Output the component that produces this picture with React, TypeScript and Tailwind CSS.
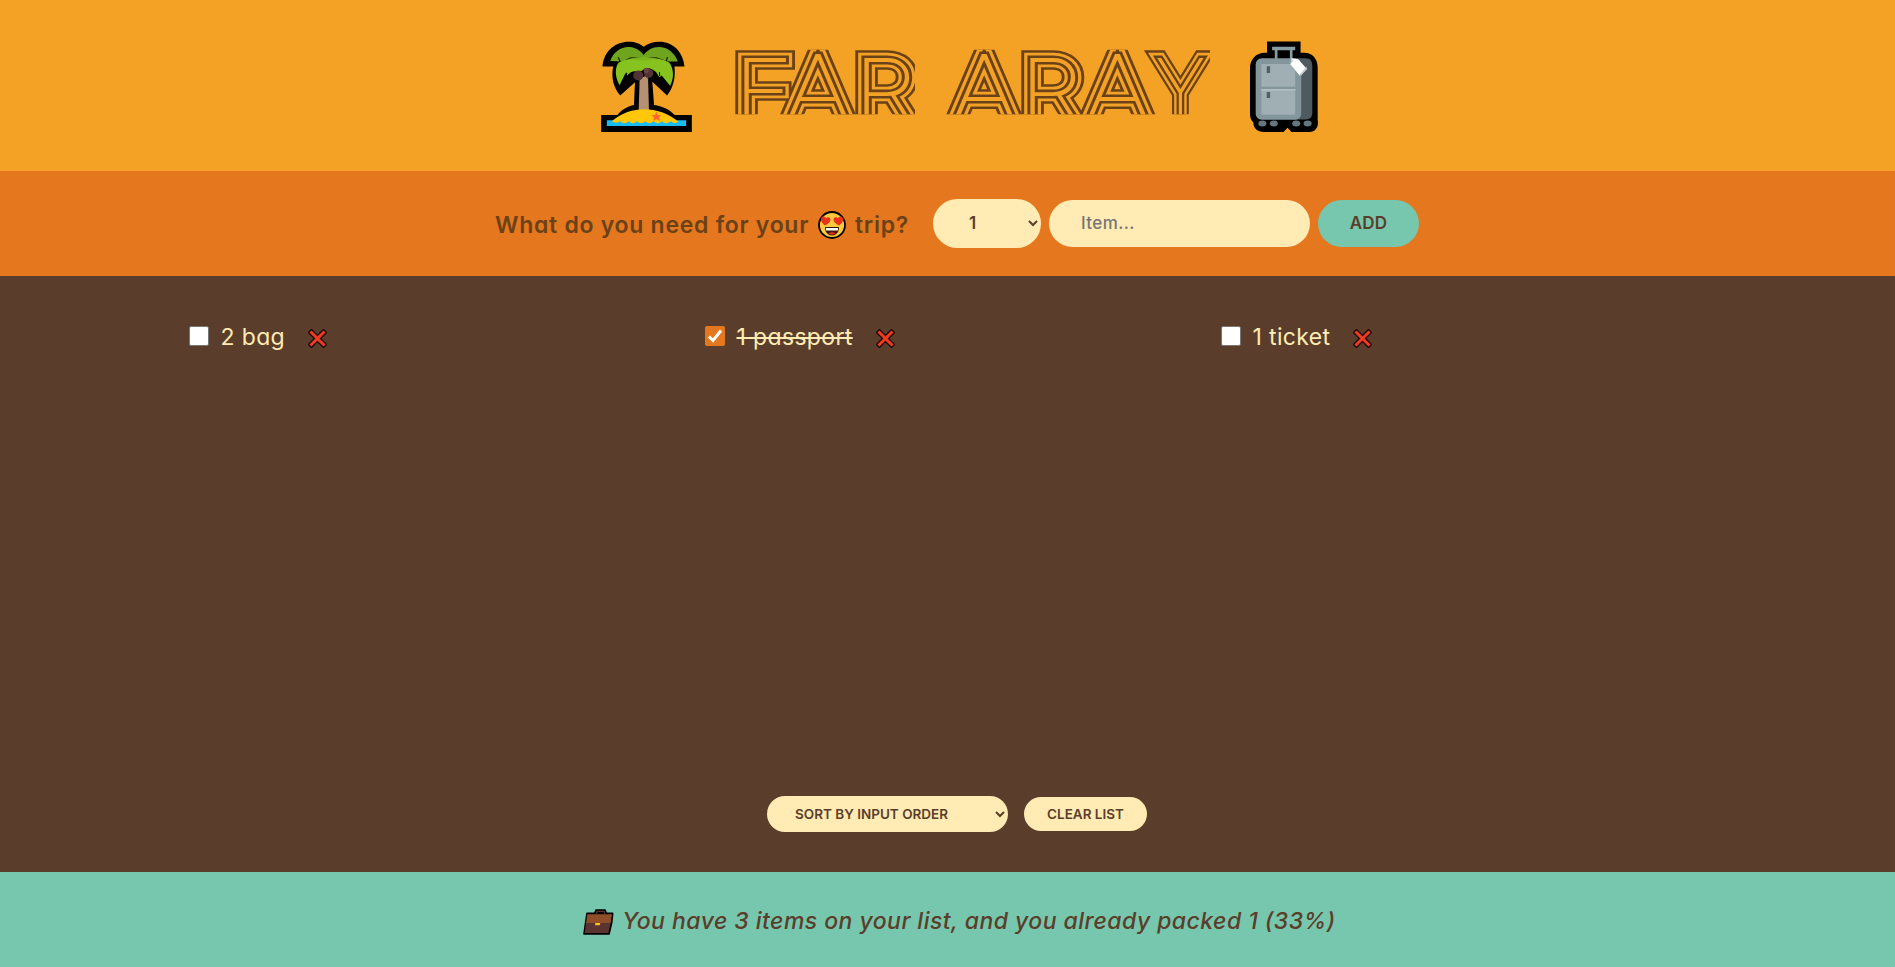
const STROKES = [
  { color: "#6b4218", width: 17.6 },
  { color: "#f4a226", width: 12.6 },
  { color: "#6b4218", width: 7 },
  { color: "#f4a226", width: 1.8 },
];

function Palm() {
  return (
    <svg className="h-[91px] w-[91px] shrink-0" viewBox="34 34 271 272">
      <path fill="#000" d="M38 110C42 62 78 36 116 36c20 0 34 6 45 15 14-10 28-15 47-15 40 0 71 30 75 74h-30c4 34-4 64-22 87l-44-41 5 69c26 4 44 12 62 30h51v51H34v-51h48c16-18 32-26 50-30l3-68-44 40c-20-24-28-54-21-87z" />
      <path fill="#6fa41f" d="M61 94C70 65 96 50 119 52c20 2 34 12 42 24 10-14 26-24 45-24 27 0 48 18 57 43l-30 0-32-12-80 0-26 12z" />
      <path fill="#86c31f" d="M85 100c15-12 45-16 76-14 32-2 62 2 77 13 14 20 14 46 2 69l-25-31-7 5-10-15c-14-12-28-16-42-4l-12 4c-10-6-22-2-32 10l-5-7-18 36c-12-22-16-46-4-66z" />
      <path fill="#79b320" d="M112 88l49-8 49 8-49 4z" />
      <path fill="none" stroke="#000" strokeWidth="3" d="M85 83l6 12M232 82l-3 12M107 141l4-12M209 139l-1-12" />
      <path fill="#b59073" d="M149 145l25-9 3 110h-31z" />
      <path fill="#8d6a52" d="M163 138l11-3v14z" />
      <circle cx="145" cy="137" r="15" fill="#533235" />
      <circle cx="176" cy="130" r="14" fill="#533235" />
      <circle cx="169" cy="122" r="8" fill="#6a464a" />
      <path fill="#18bdf5" d="M51 271h237v17H51z" />
      <path fill="#ffc60a" d="M66 274c30-26 62-36 97-36s72 12 102 37q-12 8-24-1-13 12-25 0-13 12-25 0-13 12-25 0-13 12-25 0-13 12-25 0-13 12-25 0-12 8-25 0z" />
      <path fill="#ff682f" d="M199 245l4 10 11 1-8 7 4 10-11-5-9 5 2-11-8-6 11-1z" />
    </svg>
  );
}

function Suitcase() {
  return (
    <svg className="h-[91px] w-[68px] shrink-0" viewBox="45 35 203 271">
      <path fill="#000" d="M96 36h100v34h10c25 0 41 18 41 43v157c4 20-6 36-24 36h-54l-12-12-12 12H86c-18 0-31-10-31-28-7-6-10-14-10-26V116c0-26 18-46 44-46h7z" />
      <path fill="#8a9da3" d="M111 52h69v10h-69zM119 60h8v30h-8zM164 60h8v32h-8z" />
      <path fill="#4e5a60" d="M175 86h36q20 0 20 22v141q0 20-20 20h-36z" />
      <rect x="62" y="86" width="136" height="184" rx="18" fill="#82969c" />
      <path fill="#9fafb4" d="M79 103h101v68H79zM79 182h101v73H79z" />
      <path fill="#b1bfc3" d="M78 178h103v5H78z" />
      <path fill="#4e6067" d="M95 110h10v20H95zM95 187h10v18H95z" />
      <path fill="#fff" d="M168 86l21 3 26 29-22 20-27-34z" />
      <path fill="#c6ccd0" d="M214 111l-23 26 7 1 16-18zM167 86l8 8-7 8z" />
      <g fill="#65777e">
        <ellipse cx="82" cy="281" rx="12" ry="9" />
        <ellipse cx="116" cy="281" rx="12" ry="9" />
        <ellipse cx="183" cy="281" rx="12" ry="9" />
        <ellipse cx="217" cy="281" rx="12" ry="9" />
      </g>
    </svg>
  );
}

function Title() {
  return (
    <svg className="h-[66px] w-[476px] shrink-0" viewBox="734 50 476 65">
      <defs>
        <clipPath id="band">
          <path d="M734 50h48v65h-48zM781 50h134v65h-134zM946 50h264v65h-264z" />
        </clipPath>
        <text
          id="name"
          y="124"
          x="638.3 681.5 742.6 780 826 887 942 1005.5"
          transform="scale(1.15 1)"
          fontFamily="Inter"
          fontWeight="100"
          fontSize="88"
        >
          F<tspan fontSize="93">A</tspan>R <tspan fontSize="93">A</tspan>R<tspan fontSize="93">A</tspan>
          <tspan textLength="42" lengthAdjust="spacingAndGlyphs">Y</tspan>
        </text>
      </defs>
      <g clipPath="url(#band)">
        {STROKES.map((s) => (
          <use key={s.width} href="#name" fill="#f4a226" stroke={s.color} strokeWidth={s.width} strokeMiterlimit="8" />
        ))}
      </g>
    </svg>
  );
}

function HeartEyes() {
  return (
    <svg className="ml-[9px] mr-[9px] inline-block h-7 w-7 align-[-6px]" viewBox="0 0 28 28">
      <circle cx="14" cy="14" r="13" fill="#ffc83d" stroke="#000" strokeWidth="1.8" />
      <path fill="#e8321c" d="M3 7.500c1-3 4.500-2.500 5 0 1.500-2.300 5-1 4.500 1.600-.3 2.300-2.500 4-5.500 5.400C4.500 12.800 2.500 10.500 3 7.500zM25 7.500c-1-3-4.500-2.500-5 0-1.500-2.300-5-1-4.500 1.600.3 2.300 2.500 4 5.500 5.400 2.500-1.700 4.500-4 4-7z" />
      <path fill="#4a1410" stroke="#000" strokeWidth=".8" d="M7.500 16.500h13c0 5-3 7.500-6.500 7.500s-6.500-2.500-6.500-7.500z" />
      <path fill="#fff" d="M8 17h12v2.500H8z" />
      <path fill="#e8321c" d="M10.500 22.500c2-1.700 5-1.700 7 0-2 1.500-5 1.500-7 0z" />
    </svg>
  );
}

function Briefcase() {
  return (
    <svg className="mr-2 h-[26px] w-[31px] shrink-0" viewBox="42 146 93 78">
      <path fill="#000" stroke="#000" strokeWidth="5" strokeLinejoin="round" d="M54 159h23l4-10h27l4 10h19l-3 28-8 34H45l5-34z" />
      <path fill="#8f4d28" d="M55 162h74l-4 26H51z" />
      <path fill="#5b3330" d="M51 188h74l-7 30H47z" />
      <path fill="none" stroke="#5b3330" strokeWidth="4" d="M82 160l3-7h20l3 7" />
      <path fill="#fcc21b" d="M79 188h15l-2 7H78z" />
    </svg>
  );
}

function Cross() {
  return (
    <svg className="mt-[5px] h-[19px] w-[19px] shrink-0" viewBox="0 0 19 19">
      <path d="M3.500 3.500l12 12M15.500 3.500l-12 12" stroke="#1d0a05" strokeWidth="5.600" strokeLinecap="square" />
      <path d="M3.500 3.500l12 12M15.500 3.500l-12 12" stroke="#f03a22" strokeWidth="3" strokeLinecap="square" />
    </svg>
  );
}

function Box({ checked }: { checked: boolean }) {
  return (
    <span className={checked ? "h-5 w-5 shrink-0 rounded-[2px] bg-[#e5771f]" : "h-5 w-5 shrink-0 rounded-[2px] border border-[#767676] bg-white"}>
      {checked && (
        <svg className="h-5 w-5" viewBox="0 0 20 20">
          <path d="M4 10.500l4 4 8-10" fill="none" stroke="#fff" strokeWidth="3" />
        </svg>
      )}
    </span>
  );
}

const ITEMS = [
  { label: "2 bag", packed: false },
  { label: "1 passport", packed: true },
  { label: "1 ticket", packed: false },
];

export default function App() {
  return (
    <div className="flex h-[967px] w-full flex-col overflow-hidden font-['Inter','Liberation_Sans',sans-serif] text-[#5a3e2b] [font-feature-settings:'cv11']">
      <header className="flex h-[171px] items-start justify-center bg-[#f4a226] pl-6 pt-[41px]">
        <Palm />
        <h1 className="ml-[42px] mr-10 mt-2">
          <Title />
        </h1>
        <Suitcase />
      </header>
      <form className="flex h-[105px] items-center justify-center gap-2 bg-[#e5771f] pb-[1px] pl-[19px]">
        <h3 className="mr-4 whitespace-nowrap pt-1 text-[23px] font-semibold leading-8 tracking-[0.72px] text-[#6b4218]">
          What do you need for your
          <HeartEyes />
          trip?
        </h3>
        <select className="h-[49px] w-[108px] rounded-full bg-[#ffebb3] px-8 text-[17px] font-semibold">
          <option>1</option>
        </select>
        <input className="h-[47px] w-[261px] rounded-full bg-[#ffebb3] px-8 text-[17px] font-medium tracking-[0.4px] placeholder:text-[#757575]" placeholder="Item..." />
        <button type="button" className="h-[47px] w-[101px] rounded-full bg-[#76c7ad] pt-0.5 text-[17px] font-semibold tracking-[0.2px]">ADD</button>
      </form>
      <main className="flex h-[596px] flex-col items-center justify-between bg-[#5a3e2b] pb-10 pt-11">
        <ul className="mr-0.5 grid w-[1516px] grid-cols-3 gap-8 text-[#ffebb3]">
          {ITEMS.map((item) => (
            <li key={item.label} className="flex h-8 items-center">
              <Box checked={item.packed} />
              <span className={item.packed ? "ml-3 mr-[23px] pt-0.5 text-[23px] tracking-[0.35px] line-through" : "ml-3 mr-[23px] pt-0.5 text-[23px] tracking-[0.35px]"}>{item.label}</span>
              <Cross />
            </li>
          ))}
        </ul>
        <div className="flex items-center gap-4 pl-[19px]">
          <select className="h-9 w-[241px] rounded-full bg-[#ffebb3] px-6 text-[13.5px] font-semibold">
            <option>SORT BY INPUT ORDER</option>
          </select>
          <button className="h-[34px] w-[123px] rounded-full bg-[#ffebb3] text-[13.5px] font-semibold">CLEAR LIST</button>
        </div>
      </main>
      <footer className="flex h-[95px] items-center justify-center bg-[#76c7ad] pl-6 pt-1">
        <Briefcase />
        <em className="text-[23px] font-medium tracking-[0.46px]">You have 3 items on your list, and you already packed 1 (33%)</em>
      </footer>
    </div>
  );
}
